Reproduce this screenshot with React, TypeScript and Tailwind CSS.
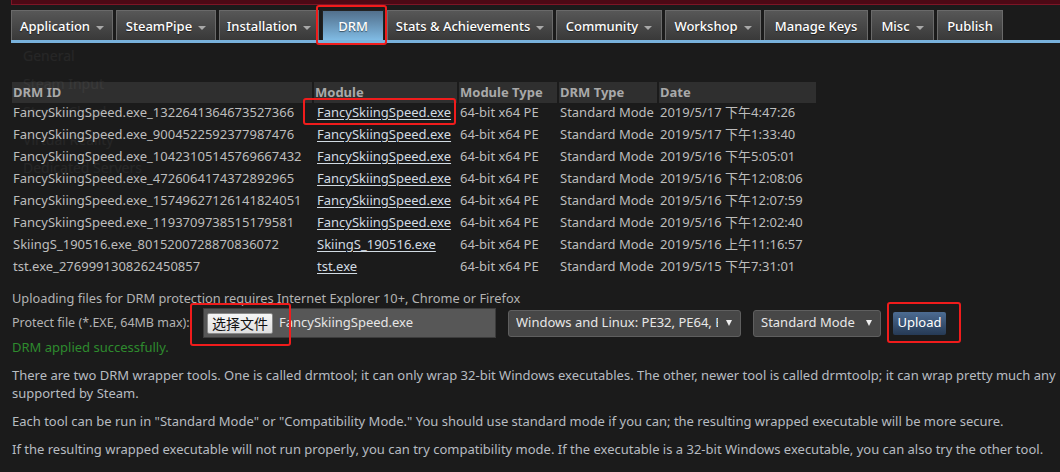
import React from 'react';

const tabs = [
  { label: 'Application', w: 'w-[102px]', caret: true },
  { label: 'SteamPipe', w: 'w-[100px]', caret: true },
  { label: 'Installation', w: 'w-[100px]', caret: true },
  { label: 'DRM', w: 'w-[62px]', caret: false, active: true },
  { label: 'Stats & Achievements', w: 'w-[166px]', caret: true },
  { label: 'Community', w: 'w-[106px]', caret: true },
  { label: 'Workshop', w: 'w-[96px]', caret: true },
  { label: 'Manage Keys', w: 'w-[104px]', caret: false },
  { label: 'Misc', w: 'w-[63px]', caret: true },
  { label: 'Publish', w: 'w-[66px]', caret: false },
];

const rows = [
  ['FancySkiingSpeed.exe_1322641364673527366', 'FancySkiingSpeed.exe', '2019/5/17 下午4:47:26'],
  ['FancySkiingSpeed.exe_9004522592377987476', 'FancySkiingSpeed.exe', '2019/5/17 下午1:33:40'],
  ['FancySkiingSpeed.exe_10423105145769667432', 'FancySkiingSpeed.exe', '2019/5/16 下午5:05:01'],
  ['FancySkiingSpeed.exe_4726064174372892965', 'FancySkiingSpeed.exe', '2019/5/16 下午12:08:06'],
  ['FancySkiingSpeed.exe_15749627126141824051', 'FancySkiingSpeed.exe', '2019/5/16 下午12:07:59'],
  ['FancySkiingSpeed.exe_1193709738515179581', 'FancySkiingSpeed.exe', '2019/5/16 下午12:02:40'],
  ['SkiingS_190516.exe_8015200728870836072', 'SkiingS_190516.exe', '2019/5/16 上午11:16:57'],
  ['tst.exe_2769991308262450857', 'tst.exe', '2019/5/15 下午7:31:01'],
];

const cols = 'grid grid-cols-[300px_143px_98px_98px_157px] gap-x-[2px]';

const Caret = () => (
  <span className="inline-block w-0 h-0 border-x-[4px] border-x-transparent border-t-[4px] border-t-[#a8a8a8] mt-[2px]" />
);

const Annot = ({ cls }: { cls: string }) => (
  <div className={`absolute border-[2px] border-[#f01c1c] rounded-[3px] pointer-events-none z-20 ${cls}`} />
);

export default function App() {
  return (
    <div
      className="relative min-h-[472px] w-[1060px] overflow-hidden bg-[#1b1b1b] text-[13px] text-[#bdbdbd]"
      style={{ fontFamily: '"Noto Sans", "Noto Sans CJK SC", sans-serif' }}
    >
      {/* top strip */}
      <div className="ml-[11px] h-[5px] bg-[#4c0915] border-l border-b border-[#7c1526]" />

      {/* tabs */}
      <div className="mt-[5px] pl-[11px] flex gap-[3px] h-[30px]">
        {tabs.map(t => (
          <div
            key={t.label}
            className={`${t.w} h-full flex items-center justify-center gap-[6px] pt-[2px] border-x border-t ${
              t.active
                ? 'border-[#222] bg-gradient-to-b from-[#52708c] to-[#80bbe4]'
                : 'border-[#6a6a6a] bg-gradient-to-b from-[#575757] to-[#393939]'
            }`}
          >
            <span className="text-white text-[13px] font-medium [text-shadow:0_1px_1px_rgba(0,0,0,0.5)]">{t.label}</span>
            {t.caret && <Caret />}
          </div>
        ))}
      </div>
      <div className="ml-[11px] h-[3px] bg-[#79b2dc]" />

      {/* table */}
      <div className="mt-[39px] pl-[12px]">
        <div className={`${cols} h-[19px] font-bold text-[#a9a9a9] leading-[21px]`}>
          {['DRM ID', 'Module', 'Module Type', 'DRM Type', 'Date'].map(h => (
            <div key={h} className="bg-[#2f2f2f] pl-[1px]">{h}</div>
          ))}
        </div>
        {rows.map(r => (
          <div key={r[0]} className={`${cols} h-[22px] leading-[22px] whitespace-nowrap`}>
            <div className="pl-[1px] overflow-hidden">{r[0]}</div>
            <div className="pl-[3px]">
              <span className="underline text-[#d2dbe3] underline-offset-2">{r[1]}</span>
            </div>
            <div className="pl-[1px]">64-bit x64 PE</div>
            <div className="pl-[1px]">Standard Mode</div>
            <div className="pl-[1px]">{r[2]}</div>
          </div>
        ))}
      </div>

      {/* upload form */}
      <div className="pl-[12px] mt-[12px] leading-[18px] text-[#b3b3b3] text-[12.8px]">
        Uploading files for DRM protection requires Internet Explorer 10+, Chrome or Firefox
      </div>
      <div className="pl-[12px] mt-[1px] h-[30px] flex items-center text-[#b3b3b3]">
        <span className="w-[191px] whitespace-nowrap text-[12.5px]">Protect file (*.EXE, 64MB max):</span>
        <div className="w-[293px] h-[30px] bg-[#575757] border border-[#3c3c3c] flex items-center pl-[3px] gap-[6px]">
          <span className="w-[66px] h-[21px] flex items-center justify-center bg-gradient-to-b from-[#f6f6f6] to-[#dedede] border border-[#8a8a8a] rounded-[2px] text-[#111] text-[14px]">
            选择文件
          </span>
          <span className="text-[#e6e6e6] text-[13px]">FancySkiingSpeed.exe</span>
        </div>
        <div className="ml-[12px] w-[233px] h-[27px] bg-[#474747] border border-[#5f5f5f] rounded-[3px] flex items-center pl-[7px] pr-[8px]">
          <span className="flex-1 overflow-hidden whitespace-nowrap text-[#e8e8e8] text-[13px]">Windows and Linux: PE32, PE64, ELF</span>
          <span className="ml-[8px] w-0 h-0 border-x-[3px] border-x-transparent border-t-[6px] border-t-[#eee]" />
        </div>
        <div className="ml-[12px] w-[128px] h-[27px] bg-[#474747] border border-[#5f5f5f] rounded-[3px] flex items-center pl-[7px] pr-[8px]">
          <span className="flex-1 whitespace-nowrap text-[#e8e8e8] text-[13px]">Standard Mode</span>
          <span className="w-0 h-0 border-x-[3px] border-x-transparent border-t-[6px] border-t-[#eee]" />
        </div>
        <div className="ml-[12px] w-[53px] h-[23px] rounded-[2px] bg-gradient-to-b from-[#4d6c92] to-[#263a55] flex items-center justify-center text-white text-[13px]">
          Upload
        </div>
      </div>
      <div className="pl-[12px] leading-[18px] text-[#2e8b2e]">DRM applied successfully.</div>

      {/* notes */}
      <div className="pl-[12px] pr-[2px] text-[#b7bcc1] leading-[18px]">
        <p className="mt-[10px] whitespace-nowrap">
          There are two DRM wrapper tools. One is called drmtool; it can only wrap 32-bit Windows executables. The other, newer tool is called drmtoolp; it can wrap pretty much any
          <br />
          supported by Steam.
        </p>
        <p className="mt-[10px]">
          Each tool can be run in "Standard Mode" or "Compatibility Mode." You should use standard mode if you can; the resulting wrapped executable will be more secure.
        </p>
        <p className="mt-[10px]">
          If the resulting wrapped executable will not run properly, you can try compatibility mode. If the executable is a 32-bit Windows executable, you can also try the other tool.
        </p>
      </div>

      {/* fading dropdown menu */}
      <div className="absolute left-[12px] top-[42px] w-[130px] text-[14px] text-white/[0.05] leading-[28px] pl-[11px] pointer-events-none">
        <div>General</div>
        <div>Steam Input</div>
        <div>Steam Cloud</div>
        <div>Virtual Reality</div>
        <div>Dedicated Servers</div>
      </div>

      {/* annotation boxes */}
      <Annot cls="left-[316px] top-[5px] w-[71px] h-[40px]" />
      <Annot cls="left-[303px] top-[98px] w-[153px] h-[27px]" />
      <Annot cls="left-[190px] top-[303px] w-[101px] h-[43px]" />
      <Annot cls="left-[887px] top-[302px] w-[74px] h-[41px]" />
    </div>
  );
}
